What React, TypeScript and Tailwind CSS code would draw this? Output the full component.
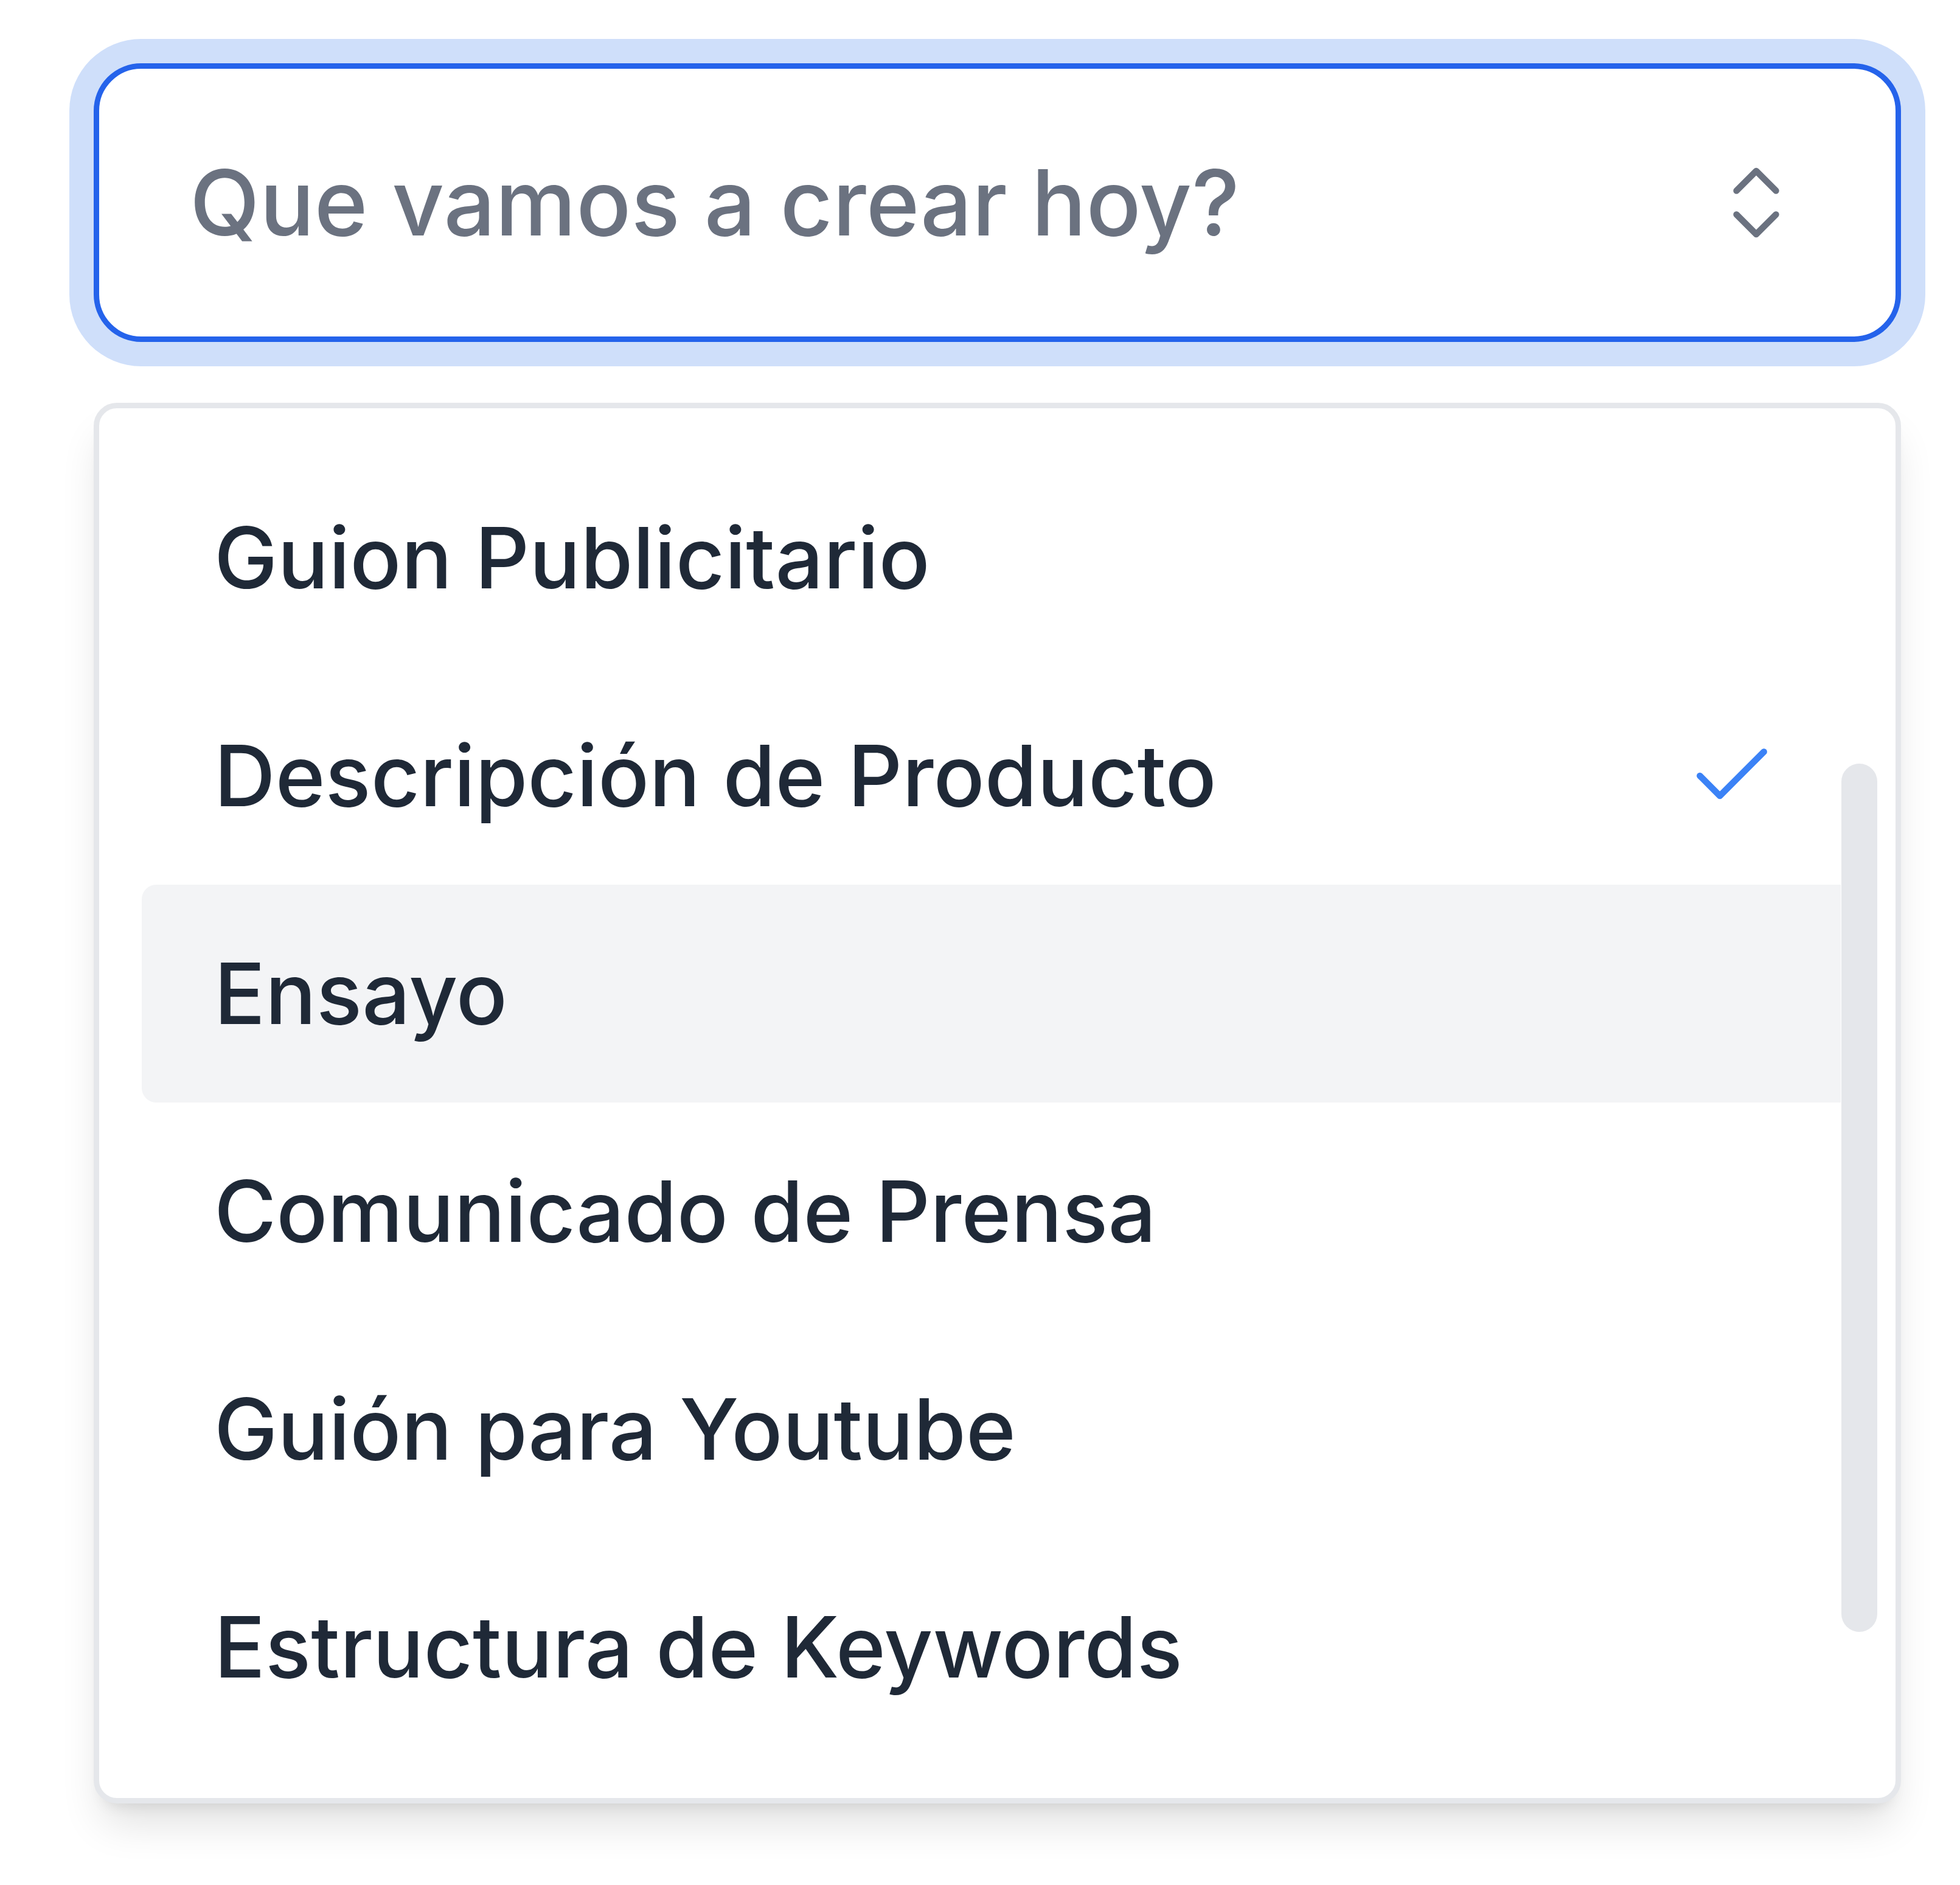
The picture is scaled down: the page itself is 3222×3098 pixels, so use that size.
import { Check, ChevronsUpDown } from "lucide-react";

const items = [
  "Guion Publicitario",
  "Descripción de Producto",
  "Ensayo",
  "Comunicado de Prensa",
  "Guión para Youtube",
  "Estructura de Keywords",
];

export default function App() {
  return (
    <div className="min-h-[3098px] bg-white pl-[154px] pt-[104px] font-['Inter','Noto_Sans',sans-serif]">
      <div className="w-[2971px]">
        <button
          type="button"
          className="flex h-[458px] w-full items-center justify-between rounded-[78px] border-[9px] border-[#2563eb] bg-white pl-[149px] pr-[151px] text-left shadow-[0_0_0_40px_#cfdffa] outline-none"
        >
          <span className="text-[149.5px] font-medium leading-none text-[#6b7280]">Que vamos a crear hoy?</span>
          <ChevronsUpDown className="h-[156px] w-[156px] text-[#6b7280]" strokeWidth={1.6} />
        </button>
        <div className="relative mt-[100px] rounded-[38px] border-[9px] border-[#e5e7eb] bg-white pb-[69px] pl-[70px] pr-[90px] pt-[67px] shadow-[0_45px_68px_-13px_rgba(0,0,0,0.12),0_18px_27px_-18px_rgba(0,0,0,0.12)]">
          {items.map((label, i) => (
            <div
              key={label}
              className={
                i === 2
                  ? "flex h-[358px] items-center justify-between rounded-l-[24px] bg-[#f3f4f6] pl-[119px] pr-[100px] text-[139.5px] font-medium leading-none text-[#1f2937]"
                  : "flex h-[358px] items-center justify-between rounded-l-[24px] pl-[119px] pr-[100px] text-[139.5px] font-medium leading-none text-[#1f2937]"
              }
            >
              <span>{label}</span>
              {i === 1 && <Check className="h-[158px] w-[158px] text-[#3b82f6]" strokeWidth={1.6} />}
            </div>
          ))}
          <div className="absolute left-[2864px] top-[584px] h-[1427px] w-[59px] rounded-full bg-[#e5e7eb]" />
        </div>
      </div>
    </div>
  );
}
